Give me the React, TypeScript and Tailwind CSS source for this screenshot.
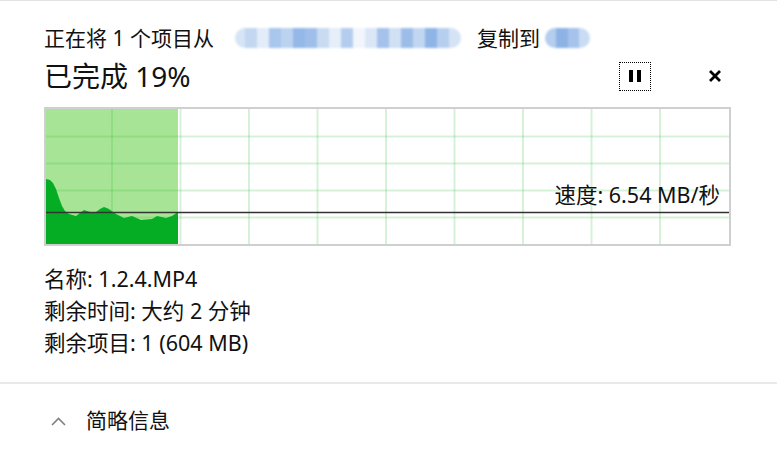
const font = '"Noto Sans", "Noto Sans CJK SC", sans-serif'

const mosaicA = [
  'w-[10px] bg-[#d6e4f6] rounded-l-full',
  'w-[12px] bg-[#c3d7f1]',
  'w-[12px] bg-[#e3ecf9]',
  'w-[12px] bg-[#a9c6ec]',
  'w-[12px] bg-[#bcd3f0]',
  'w-[12px] bg-[#94b8e7]',
  'w-[12px] bg-[#9fbfea]',
  'w-[12px] bg-[#c9dbf3]',
  'w-[12px] bg-[#e6eef9]',
  'w-[12px] bg-[#b4cdef]',
  'w-[12px] bg-[#f2f6fc]',
  'w-[12px] bg-[#dbe7f7]',
  'w-[12px] bg-[#a4c2eb]',
  'w-[12px] bg-[#d0e0f5]',
  'w-[12px] bg-[#9dbde9]',
  'w-[12px] bg-[#c1d6f1]',
  'w-[12px] bg-[#8fb4e6]',
  'w-[12px] bg-[#b7cfef]',
  'w-[12px] bg-[#d4e3f6] rounded-r-full',
]

const mosaicB = [
  'w-[11px] bg-[#b5cdee] rounded-l-full',
  'w-[12px] bg-[#8db3e5]',
  'w-[11px] bg-[#a6c3eb]',
  'w-[11px] bg-[#c9dcf4] rounded-r-full',
]

function Mosaic({ cells }: { cells: string[] }) {
  return (
    <span className="flex h-[20px] blur-[1px]">
      {cells.map((c, i) => (
        <span key={i} className={'h-full ' + c} />
      ))}
    </span>
  )
}

function Chart() {
  const vx = [66, 134.5, 203, 271.5, 340, 408.5, 477, 545.5, 614]
  const hy = [27.5, 54.5, 81.5, 108.5]
  return (
    <div className="relative h-[139px] w-[687px] border-2 border-[#cfcfcf]">
      <svg width="683" height="135" viewBox="0 0 683 135" className="block">
        <rect x="0" y="0" width="132" height="135" fill="#a8e495" />
        {vx.map((x) => (
          <line key={x} x1={x} y1="0" x2={x} y2="135" stroke="#2dbf3c" strokeOpacity="0.2" strokeWidth="2" />
        ))}
        {hy.map((y) => (
          <line key={y} x1="0" y1={y} x2="683" y2={y} stroke="#2dbf3c" strokeOpacity="0.2" strokeWidth="2" />
        ))}
        <path
          d="M0,135 L0,70 L4,71 L7,74 L10,80 L13,89 L16,97 L19,102 L23,105 L30,107 L34,104 L38,101 L44,103 L50,103 L54,100 L58,98 L63,100 L67,103 L70,105 L78,109 L86,107 L95,111 L106,110 L111,107 L120,109 L126,107 L132,103 L132,135 Z"
          fill="#05ad24"
        />
        <line x1="0" y1="103.5" x2="683" y2="103.5" stroke="#333333" strokeWidth="1.6" />
      </svg>
      <span className="absolute right-[9px] top-[73px] text-[21.5px] leading-[26px] text-[#111]">
        速度: 6.54 MB/秒
      </span>
    </div>
  )
}

export default function App() {
  return (
    <div
      className="flex h-[453px] w-[777px] flex-col overflow-hidden border-t border-[#e3e3e3] bg-white text-[#111]"
      style={{ fontFamily: font }}
    >
      <div className="px-[44px]">
        <div className="mt-[21px] flex h-[32px] items-center text-[21px] leading-[32px]">
          <span>正在将 1 个项目从</span>
          <span className="ml-[21px]">
            <Mosaic cells={mosaicA} />
          </span>
          <span className="ml-[16px]">复制到</span>
          <span className="ml-[5px]">
            <Mosaic cells={mosaicB} />
          </span>
        </div>

        <div className="flex h-[44px] w-[687px] items-center">
          <span className="flex-1 text-[28px] leading-[36px]">已完成 19%</span>
          <button
            type="button"
            className="flex h-[29px] w-[32px] items-center justify-center gap-[4px] border border-dotted border-black"
          >
            <span className="h-[12px] w-[4px] bg-black" />
            <span className="h-[12px] w-[4px] bg-black" />
          </button>
          <button type="button" className="ml-[48px] flex h-[32px] w-[32px] items-center justify-center">
            <svg width="14" height="14" viewBox="0 0 14 14">
              <path d="M2,2 L12,12 M12,2 L2,12" stroke="#000" strokeWidth="2.8" />
            </svg>
          </button>
        </div>

        <div className="mt-[9px]">
          <Chart />
        </div>

        <div className="mt-[17px] text-[21.5px] leading-[32px]">
          <p>名称: 1.2.4.MP4</p>
          <p>剩余时间: 大约 2 分钟</p>
          <p>剩余项目: 1 (604 MB)</p>
        </div>
      </div>

      <div className="mt-[23px] h-[2px] bg-[#e9e9e9]" />

      <div className="mt-[17px] flex h-[40px] items-center pl-[51px] text-[21px]">
        <svg width="15" height="10" viewBox="0 0 15 10">
          <polyline points="1,9 7.5,2.5 14,9" fill="none" stroke="#808080" strokeWidth="1.6" />
        </svg>
        <span className="ml-[20px]">简略信息</span>
      </div>
    </div>
  )
}
